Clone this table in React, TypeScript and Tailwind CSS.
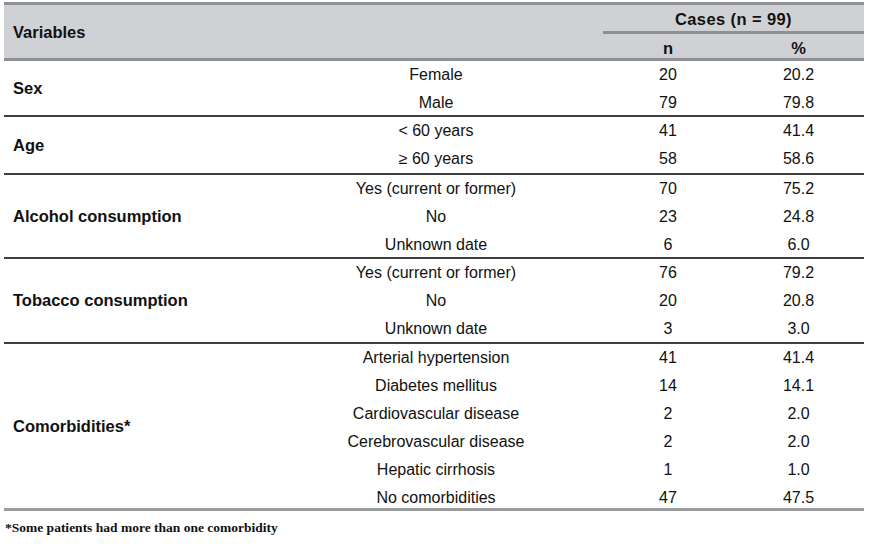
import React from "react";

type Row = { label: string; n: string; pct: string };
type Group = { name: string; height: string; rows: Row[] };

const groups: Group[] = [
  {
    name: "Sex",
    height: "h-[56px]",
    rows: [
      { label: "Female", n: "20", pct: "20.2" },
      { label: "Male", n: "79", pct: "79.8" },
    ],
  },
  {
    name: "Age",
    height: "h-[58px]",
    rows: [
      { label: "< 60 years", n: "41", pct: "41.4" },
      { label: "≥ 60 years", n: "58", pct: "58.6" },
    ],
  },
  {
    name: "Alcohol consumption",
    height: "h-[84px]",
    rows: [
      { label: "Yes (current or former)", n: "70", pct: "75.2" },
      { label: "No", n: "23", pct: "24.8" },
      { label: "Unknown date", n: "6", pct: "6.0" },
    ],
  },
  {
    name: "Tobacco consumption",
    height: "h-[85px]",
    rows: [
      { label: "Yes (current or former)", n: "76", pct: "79.2" },
      { label: "No", n: "20", pct: "20.8" },
      { label: "Unknown date", n: "3", pct: "3.0" },
    ],
  },
  {
    name: "Comorbidities*",
    height: "h-[167px]",
    rows: [
      { label: "Arterial hypertension", n: "41", pct: "41.4" },
      { label: "Diabetes mellitus", n: "14", pct: "14.1" },
      { label: "Cardiovascular disease", n: "2", pct: "2.0" },
      { label: "Cerebrovascular disease", n: "2", pct: "2.0" },
      { label: "Hepatic cirrhosis", n: "1", pct: "1.0" },
      { label: "No comorbidities", n: "47", pct: "47.5" },
    ],
  },
];

const App = () => {
  return (
    <div className="w-[870px] h-[549px] bg-white pt-[2px] pl-[4px] text-[#111111] font-['Liberation_Sans',Arial,sans-serif]">
      <div className="w-[860px]">
        {/* header */}
        <div className="flex border-t-[3px] border-b-[3px] border-[#8e8f92] bg-[#d0d1d5] h-[59px]">
          <div className="w-[265px] flex items-center pl-[9px] pt-[2px] text-[16.5px] font-bold">
            Variables
          </div>
          <div className="w-[334px]" />
          <div className="flex-1 flex flex-col">
            <div className="h-[29px] pt-[3px] border-b-[3px] border-[#8e8f92] flex items-center justify-center text-[16.5px] tracking-[0.4px] font-bold">
              Cases (n = 99)
            </div>
            <div className="flex-1 flex pt-[2px] text-[16.5px] font-bold">
              <div className="w-[130px] flex items-center justify-center">n</div>
              <div className="flex-1 flex items-center justify-center">%</div>
            </div>
          </div>
        </div>

        {/* body */}
        {groups.map((g, gi) => (
          <div
            key={g.name}
            className={`flex ${g.height} ${
              gi === groups.length - 1
                ? "border-b-[3px] border-[#9a9b9d]"
                : "border-b-2 border-[#3f3f3f]"
            }`}
          >
            <div className="w-[265px] flex items-center pl-[9px] text-[16.5px] font-bold">
              {g.name}
            </div>
            <div className="flex-1 flex flex-col">
              {g.rows.map((r) => (
                <div key={r.label} className="h-[28px] shrink-0 flex items-center text-[16px]">
                  <div className="w-[334px] text-center">{r.label}</div>
                  <div className="w-[130px] text-center">{r.n}</div>
                  <div className="flex-1 text-center">{r.pct}</div>
                </div>
              ))}
            </div>
          </div>
        ))}

        <p className="mt-[7px] pl-[1px] text-[13.5px] font-bold font-['Liberation_Serif','Times_New_Roman',serif]">
          *Some patients had more than one comorbidity
        </p>
      </div>
    </div>
  );
};

export default App;
